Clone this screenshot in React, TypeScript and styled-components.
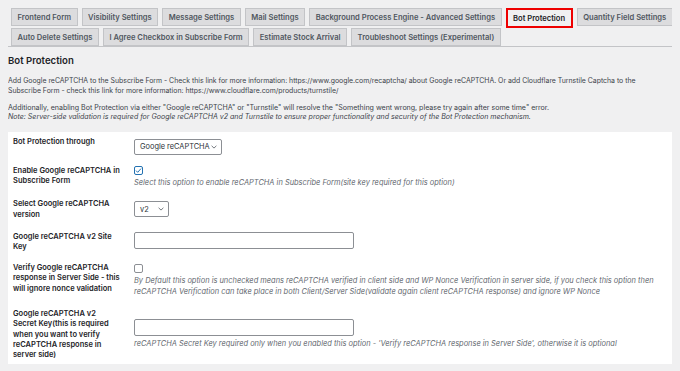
import React from 'react';
import styled, {createGlobalStyle, css} from 'styled-components';

const GlobalStyle = createGlobalStyle`
    html, body {
        background: #f0f0f1;
    }
    body {
        margin: 8px;
        font-family: Inter, "Liberation Sans", sans-serif;
        color: #3c434a;
        -webkit-font-smoothing: antialiased;
    }
`;

const NavWrapper = styled.nav`
    display: flex;
    flex-direction: column;
    gap: 2px;
    padding-left: 3px;
    border-bottom: 1px solid #c3c4c7;
`;

const TabRow = styled.div`
    display: flex;
    align-items: flex-start;
    gap: 4px;
`;

const Tab = styled.a<{$active?: boolean}>`
    box-sizing: border-box;
    height: 18px;
    padding: 0 5.5px;
    display: flex;
    align-items: center;
    font-size: 7.6px;
    font-weight: 600;
    color: #50575e;
    background: #dcdcde;
    border: 1px solid #c3c4c7;
    white-space: nowrap;

    ${(p) => p.$active && css`
        height: 20px;
        margin-bottom: -2px;
        border: 2px solid #e00;
        background: #f0f0f1;
        color: #1d2327;
    `}
`;

const Title = styled.h2`
    margin: 7.7px 0 0;
    font-size: 9.6px;
    line-height: 12px;
    font-weight: 600;
    color: #1d2327;
`;

const Intro = styled.p`
    margin: 9.2px 0 0;
    font-size: 6.9px;
    line-height: 9.7px;
    color: #3c434a;

    & + & {
        margin-top: 7.3px;
        font-size: 7.05px;
    }
`;

const Panel = styled.div`
    margin-top: 10.5px;
    background: #fff;
    padding: 5px 10px 3.5px 5px;
    display: grid;
    grid-template-rows: 28.4px 33.3px 32.7px 31px 46px auto;
`;

const Row = styled.div`
    display: grid;
    grid-template-columns: 121px 1fr;
    align-items: start;
`;

const Label = styled.div`
    font-size: 7.5px;
    line-height: 10.4px;
    font-weight: 600;
    color: #1d2327;
    white-space: nowrap;
`;

const Field = styled.div<{$pt: number}>`
    padding-top: ${(p) => p.$pt}px;
    display: flex;
    flex-direction: column;
    align-items: flex-start;
`;

const Select = styled.div<{$w: number}>`
    box-sizing: border-box;
    width: ${(p) => p.$w}px;
    height: 16px;
    padding: 0 4px 0 5px;
    display: flex;
    align-items: center;
    justify-content: space-between;
    border: 1px solid #8c8f94;
    border-radius: 2px;
    background: #fff;
    font-size: 7.4px;
    color: #2c3338;
`;

const TextInput = styled.div`
    box-sizing: border-box;
    width: 220px;
    height: 17px;
    border: 1px solid #8c8f94;
    border-radius: 2px;
    background: #fff;
`;

const Checkbox = styled.span<{$checked?: boolean}>`
    box-sizing: border-box;
    width: 9px;
    height: 9px;
    display: flex;
    align-items: center;
    justify-content: center;
    border: 1px solid ${(p) => (p.$checked ? '#2271b1' : '#8c8f94')};
    border-radius: 2px;
    background: #fff;
`;

const Description = styled.p`
    margin: 3px 0 0;
    font-size: 7.45px;
    line-height: 10.7px;
    font-style: italic;
    color: #646970;
    white-space: nowrap;
`;

const Chevron = () => (
    <svg width="6" height="4" viewBox="0 0 6 4">
        <path d="M0.6 0.8l2.4 2.3 2.4-2.3" fill="none" stroke="#50575e" strokeWidth="0.8"/>
    </svg>
);

const Check = () => (
    <svg width="7" height="7" viewBox="0 0 7 7">
        <path d="M1 3.6l1.7 1.7L6 1.6" fill="none" stroke="#2271b1" strokeWidth="1"/>
    </svg>
);

const lines = (text: string[]) => text.map((t, i) => (
    <React.Fragment key={i}>{i > 0 && <br/>}{t}</React.Fragment>
));

const tabsTop = [
    {label: 'Frontend Form'},
    {label: 'Visibility Settings'},
    {label: 'Message Settings'},
    {label: 'Mail Settings'},
    {label: 'Background Process Engine - Advanced Settings'},
    {label: 'Bot Protection', active: true},
    {label: 'Quantity Field Settings'},
];

const tabsBottom = [
    'Auto Delete Settings',
    'I Agree Checkbox in Subscribe Form',
    'Estimate Stock Arrival',
    'Troubleshoot Settings (Experimental)',
];

export default function App() {
    return (
        <>
            <GlobalStyle/>
            <NavWrapper>
                <TabRow>
                    {tabsTop.map((t) => (
                        <Tab key={t.label} $active={t.active}>{t.label}</Tab>
                    ))}
                </TabRow>
                <TabRow>
                    {tabsBottom.map((t) => <Tab key={t}>{t}</Tab>)}
                </TabRow>
            </NavWrapper>

            <Title>{'Bot Protection'}</Title>
            <Intro>
                {'Add Google reCAPTCHA to the Subscribe Form - Check this link for more information: https://www.google.com/recaptcha/ about Google reCAPTCHA. Or add Cloudflare Turnstile Captcha to the'}
                <br/>
                {'Subscribe Form - check this link for more information: https://www.cloudflare.com/products/turnstile/'}
            </Intro>
            <Intro>
                {'Additionally, enabling Bot Protection via either "Google reCAPTCHA" or "Turnstile" will resolve the "Something went wrong, please try again after some time" error.'}
                <br/>
                <i>{'Note: Server-side validation is required for Google reCAPTCHA v2 and Turnstile to ensure proper functionality and security of the Bot Protection mechanism.'}</i>
            </Intro>

            <Panel>
                <Row>
                    <Label>{'Bot Protection through'}</Label>
                    <Field $pt={1.2}>
                        <Select $w={88}>{'Google reCAPTCHA'}<Chevron/></Select>
                    </Field>
                </Row>
                <Row>
                    <Label>{lines(['Enable Google reCAPTCHA in', 'Subscribe Form'])}</Label>
                    <Field $pt={0.5}>
                        <Checkbox $checked><Check/></Checkbox>
                        <Description>{'Select this option to enable reCAPTCHA in Subscribe Form(site key required for this option)'}</Description>
                    </Field>
                </Row>
                <Row>
                    <Label>{lines(['Select Google reCAPTCHA', 'version'])}</Label>
                    <Field $pt={2.2}>
                        <Select $w={35}>{'v2'}<Chevron/></Select>
                    </Field>
                </Row>
                <Row>
                    <Label>{lines(['Google reCAPTCHA v2 Site', 'Key'])}</Label>
                    <Field $pt={0.5}>
                        <TextInput/>
                    </Field>
                </Row>
                <Row>
                    <Label>{lines(['Verify Google reCAPTCHA', 'response in Server Side - this', 'will ignore nonce validation'])}</Label>
                    <Field $pt={1.5}>
                        <Checkbox/>
                        <Description>
                            {lines([
                                'By Default this option is unchecked means reCAPTCHA verified in client side and WP Nonce Verification in server side, if you check this option then',
                                'reCAPTCHA Verification can take place in both Client/Server Side(validate again client reCAPTCHA response) and ignore WP Nonce',
                            ])}
                        </Description>
                    </Field>
                </Row>
                <Row>
                    <Label>{lines(['Google reCAPTCHA v2', 'Secret Key(this is required', 'when you want to verify', 'reCAPTCHA response in', 'server side)'])}</Label>
                    <Field $pt={9.8}>
                        <TextInput/>
                        <Description>{"reCAPTCHA Secret Key required only when you enabled this option - 'Verify reCAPTCHA response in Server Side', otherwise it is optional"}</Description>
                    </Field>
                </Row>
            </Panel>
        </>
    );
}
